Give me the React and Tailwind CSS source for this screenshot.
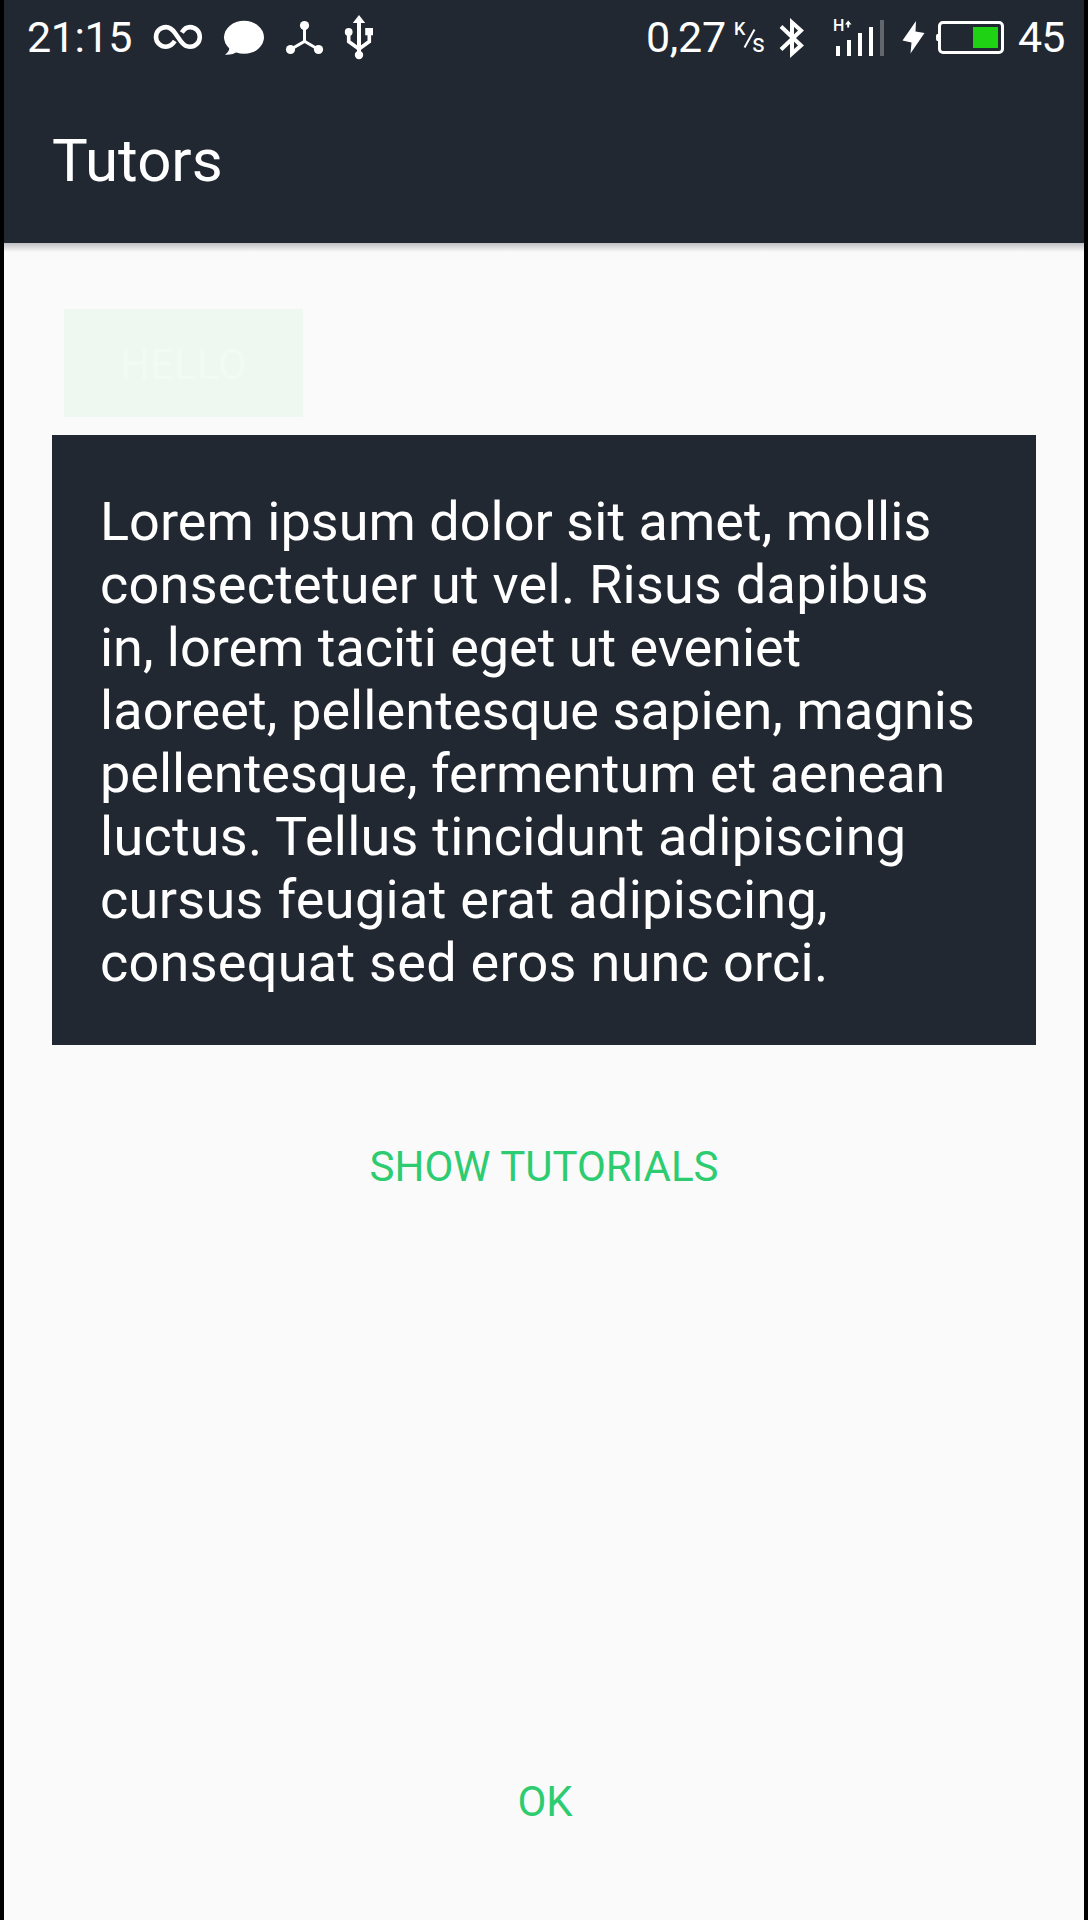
import React from "react";

const LINES = [
  { text: "Lorem ipsum dolor sit amet, mollis", tracking: "tracking-[0.03px]" },
  { text: "consectetuer ut vel. Risus dapibus", tracking: "tracking-[0.25px]" },
  { text: "in, lorem taciti eget ut eveniet", tracking: "tracking-[-0.03px]" },
  { text: "laoreet, pellentesque sapien, magnis", tracking: "tracking-[0.1px]" },
  { text: "pellentesque, fermentum et aenean", tracking: "tracking-normal" },
  { text: "luctus. Tellus tincidunt adipiscing", tracking: "tracking-[0.25px]" },
  { text: "cursus feugiat erat adipiscing,", tracking: "tracking-[0.31px]" },
  { text: "consequat sed eros nunc orci.", tracking: "tracking-[0.28px]" },
];

function InfinityIcon() {
  return (
    <svg width="56" height="75" viewBox="150 0 56 75" fill="none" stroke="#fff" strokeWidth="4.6">
      <path d="M174.8 41 C172.5 44.5 169.5 46.7 166 46.7 A10 9.8 0 0 1 166 27.1 C170 27.1 172.5 29.5 175 33 L181 41.500 C183.500 45 186 46.700 190 46.700 A9.800 9.800 0 0 0 190 27.100 C186.500 27.100 184 29 181.800 32.500" />
    </svg>
  );
}

function ChatIcon() {
  return (
    <svg width="44" height="75" viewBox="222 0 44 75" fill="#fff">
      <ellipse cx="244" cy="37.300" rx="20" ry="16.500" />
      <path d="M229.500 47 C229.500 50 228 52.500 225 54.800 C230.500 55 234.500 54 238 51 Z" />
    </svg>
  );
}

function NodesIcon() {
  return (
    <svg width="42" height="75" viewBox="284 0 42 75" fill="#fff">
      <path d="M304.500 25 V41.300 L290.500 49.500 M304.500 41.300 L318.500 49.500" fill="none" stroke="#fff" strokeWidth="3" />
      <circle cx="304.500" cy="25.500" r="4.600" />
      <circle cx="290.500" cy="49.500" r="4.600" />
      <circle cx="318.500" cy="49.500" r="4.600" />
    </svg>
  );
}

function UsbIcon() {
  return (
    <svg width="32" height="75" viewBox="343 0 32 75" fill="#fff">
      <path d="M359 15 L365.200 23 H361 V57 H357 V23 H352.800 Z" />
      <path d="M348.700 32 V41.500 L359 49 L369.300 41.500 V32" fill="none" stroke="#fff" strokeWidth="3.600" />
      <circle cx="348.700" cy="32" r="3.900" />
      <rect x="365.200" y="28" width="7.800" height="7.300" />
      <circle cx="359" cy="55" r="4.200" />
    </svg>
  );
}

function SpeedUnit() {
  return (
    <div className="relative h-[75px] w-[32px]">
      <span className="absolute left-0 top-[19px] text-[18px] leading-[20px] font-medium">K</span>
      <svg className="absolute left-0 top-0" width="32" height="75" viewBox="734 0 32 75" stroke="#fff" strokeWidth="2">
        <path d="M744.500 47.500 L754.500 29.500" />
      </svg>
      <span className="absolute left-[18px] top-[34px] text-[25px] leading-[20px]">s</span>
    </div>
  );
}

function BluetoothIcon() {
  return (
    <svg width="28" height="75" viewBox="778 0 28 75" fill="none" stroke="#fff" strokeWidth="4">
      <path d="M781 26.500 L801 45.500 L792 53.500 V22.500 L801 30.500 L781 49.500" />
    </svg>
  );
}

function SignalIcon() {
  return (
    <div className="relative h-[75px] w-[54px]">
      <span className="absolute left-0 top-[16px] text-[16px] leading-[20px] font-medium">H</span>
      <svg className="absolute left-0 top-0" width="54" height="75" viewBox="833 0 54 75" fill="#fff">
        <path d="M848.200 20.500 L851.500 24.500 H849.200 V27.500 H847.200 V24.500 H845 Z" />
        <rect x="836" y="46" width="4" height="10" />
        <rect x="847" y="40" width="4" height="16" />
        <rect x="858" y="33" width="4" height="23" />
        <rect x="869" y="27" width="4" height="29" />
        <rect x="880" y="20" width="4" height="36" fill="#63676d" />
      </svg>
    </div>
  );
}

function BatteryIcon() {
  return (
    <svg width="106" height="75" viewBox="902 0 106 75" fill="#fff">
      <path d="M916 21 L902.500 40.500 L911.500 42.500 L910.500 53.500 L924.500 33 L915.500 31.500 Z" />
      <rect x="939.500" y="22.500" width="63" height="30" rx="3.500" fill="none" stroke="#fff" strokeWidth="3" />
      <path d="M938 34 H937.500 Q936 34 936 36 V39 Q936 41 937.500 41 H938 Z" />
      <rect x="973" y="27" width="25" height="21" fill="#1fd314" />
    </svg>
  );
}

function StatusBar() {
  return (
    <div className="flex h-[75px] items-center justify-between whitespace-nowrap text-[43px] leading-[75px]">
      <div className="flex items-center pl-[23px]">
        <span className="w-[123px] tracking-[-0.4px]">21:15</span>
        <InfinityIcon />
        <div className="ml-[16px] flex"><ChatIcon /></div>
        <div className="ml-[18px] flex"><NodesIcon /></div>
        <div className="ml-[17px] flex"><UsbIcon /></div>
      </div>
      <div className="flex items-center">
        <span className="w-[88px] tracking-[-0.3px]">0,27</span>
        <SpeedUnit />
        <div className="ml-[12px] flex"><BluetoothIcon /></div>
        <div className="ml-[27px] flex"><SignalIcon /></div>
        <div className="ml-[15px] flex"><BatteryIcon /></div>
        <span className="ml-[10px] w-[66px] tracking-[-0.8px]">45</span>
      </div>
    </div>
  );
}

export default function App() {
  return (
    <div className="flex h-[1920px] w-[1088px] flex-col overflow-hidden border-x-4 border-black bg-[#fafafa] font-['Roboto',sans-serif] text-white">
      <header className="h-[243px] shrink-0 bg-[#222831]">
        <StatusBar />
        <h1 className="flex h-[168px] items-center pl-[48px] pt-[3px] text-[60px] leading-[70px]">Tutors</h1>
      </header>
      <div className="h-[9px] shrink-0 bg-linear-to-b from-[#c0bfc1] to-[#fafafa]" />
      <main className="flex flex-1 flex-col items-center px-[48px]">
        <button className="ml-[12px] mt-[57px] h-[108px] w-[239px] self-start bg-[#eff8f0] pt-[2px] text-[42px] text-[#f3faf4]">HELLO</button>
        <div className="mt-[18px] h-[610px] w-full bg-[#222831] px-[48px] pt-[55px] text-[54px] leading-[63px]">
          {LINES.map(({ text, tracking }) => (
            <p key={text} className={`whitespace-nowrap ${tracking}`}>{text}</p>
          ))}
        </div>
        <button className="mt-[94px] h-[56px] text-[42px] leading-[56px] text-[#2ecc71]">SHOW TUTORIALS</button>
        <button className="ml-[2px] mt-[579px] h-[56px] text-[42px] leading-[56px] text-[#2ecc71]">OK</button>
      </main>
    </div>
  );
}
